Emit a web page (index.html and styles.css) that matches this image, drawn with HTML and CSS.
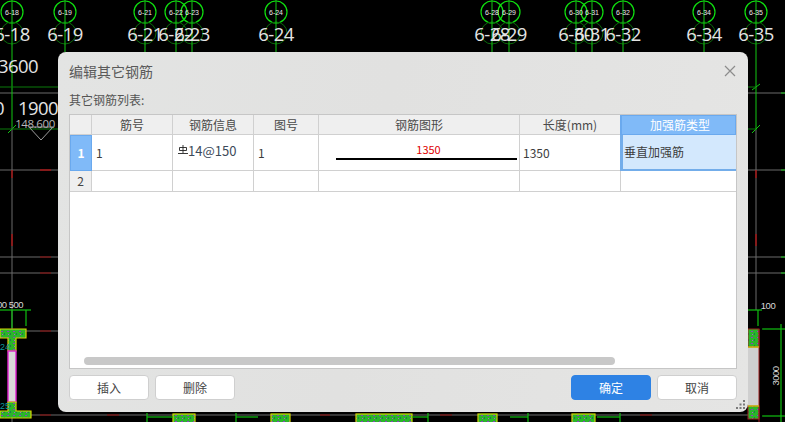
FILE: index.html
```html
<!DOCTYPE html>
<html lang="zh-CN">
<head>
  <meta charset="UTF-8" />
  <title>编辑其它钢筋</title>
  <link rel="stylesheet" href="styles.css">
</head>
<body>

  <!-- CAD drawing behind the dialog -->
  <svg class="cad" width="785" height="422" viewBox="0 0 785 422">
    <defs>
      <pattern id="hatch" width="6" height="6" patternUnits="userSpaceOnUse">
        <rect width="6" height="6" fill="#2ab52a"/>
        <rect x="1" y="1" width="2" height="1" fill="#8a3fc0"/>
        <rect x="4" y="3" width="1" height="2" fill="#1c7f4a"/>
        <rect x="2" y="4" width="1" height="1" fill="#b04fd0"/>
      </pattern>
      <g id="bubble">
        <circle cy="12" r="11" class="ring"/>
        <circle cy="33" r="11" class="ring-dark"/>
        <line y1="0" y2="52" class="axis"/>
      </g>
    </defs>

    <g class="grid-gray">
      <line x1="0" y1="93" x2="58" y2="93"/>
      <line x1="0" y1="170" x2="58" y2="170"/>
      <line x1="0" y1="257" x2="58" y2="257"/>
      <line x1="0" y1="273" x2="58" y2="273"/>
      <line x1="26" y1="331" x2="58" y2="331"/>
      <line x1="31" y1="415" x2="748" y2="415"/>
      <line x1="12" y1="127" x2="12" y2="422"/>
      <line x1="748" y1="93" x2="785" y2="93"/>
      <line x1="748" y1="170" x2="785" y2="170"/>
      <line x1="748" y1="257" x2="785" y2="257"/>
      <line x1="748" y1="273" x2="785" y2="273"/>
      <line x1="756" y1="130" x2="756" y2="310"/>
    </g>

    <g class="dash-red">
      <line x1="12" y1="170" x2="12" y2="178"/>
      <line x1="12" y1="234" x2="12" y2="246"/>
      <line x1="40" y1="170" x2="51" y2="170"/>
      <line x1="756" y1="170" x2="756" y2="178"/>
      <line x1="756" y1="234" x2="756" y2="246"/>
    </g>
    <g class="dash-dark">
      <line x1="40" y1="257" x2="51" y2="257"/>
      <line x1="40" y1="273" x2="51" y2="273"/>
      <line x1="40" y1="331" x2="51" y2="331"/>
      <line x1="40" y1="415" x2="51" y2="415"/>
      <line x1="107" y1="415" x2="119" y2="415"/>
      <line x1="320" y1="415" x2="330" y2="415"/>
      <line x1="440" y1="415" x2="452" y2="415"/>
      <line x1="640" y1="415" x2="652" y2="415"/>
    </g>

    <g class="axis">
      <line x1="12" y1="52" x2="12" y2="127"/>
      <line x1="756" y1="52" x2="756" y2="130"/>
      <line x1="8" y1="133" x2="16" y2="125"/>
      <line x1="752" y1="90" x2="760" y2="84"/>
      <line x1="752" y1="133" x2="760" y2="125"/>
      <line x1="781" y1="93" x2="785" y2="93"/>
      <line x1="781" y1="170" x2="785" y2="170"/>
      <line x1="781" y1="257" x2="785" y2="257"/>
      <line x1="781" y1="273" x2="785" y2="273"/>
    </g>
    <g class="axis-dark">
      <line x1="0" y1="87" x2="58" y2="87"/>
      <line x1="0" y1="129" x2="58" y2="129"/>
      <line x1="748" y1="87" x2="756" y2="87"/>
      <line x1="748" y1="129" x2="756" y2="129"/>
    </g>

    <use href="#bubble" x="12"/>
    <use href="#bubble" x="65"/>
    <use href="#bubble" x="145"/>
    <use href="#bubble" x="176"/>
    <use href="#bubble" x="192"/>
    <use href="#bubble" x="276"/>
    <use href="#bubble" x="492"/>
    <use href="#bubble" x="509"/>
    <use href="#bubble" x="576"/>
    <use href="#bubble" x="592"/>
    <use href="#bubble" x="623"/>
    <use href="#bubble" x="704"/>
    <use href="#bubble" x="756"/>

    <g class="tag">
      <text x="12" y="15">6-18</text>
      <text x="65" y="15">6-19</text>
      <text x="145" y="15">6-21</text>
      <text x="176" y="15">6-22</text>
      <text x="192" y="15">6-23</text>
      <text x="276" y="15">6-24</text>
      <text x="492" y="15">6-28</text>
      <text x="509" y="15">6-29</text>
      <text x="576" y="15">6-30</text>
      <text x="592" y="15">6-31</text>
      <text x="623" y="15">6-32</text>
      <text x="704" y="15">6-34</text>
      <text x="756" y="15">6-35</text>
    </g>
    <g class="label">
      <text x="12" y="41">6-18</text>
      <text x="65" y="41">6-19</text>
      <text x="145" y="41">6-21</text>
      <text x="176" y="41">6-22</text>
      <text x="192" y="41">6-23</text>
      <text x="276" y="41">6-24</text>
      <text x="492" y="41">6-28</text>
      <text x="509" y="41">6-29</text>
      <text x="576" y="41">6-30</text>
      <text x="592" y="41">6-31</text>
      <text x="623" y="41">6-32</text>
      <text x="704" y="41">6-34</text>
      <text x="756" y="41">6-35</text>
      <text x="18" y="73">3600</text>
      <text x="-1" y="115">0</text>
      <text x="38" y="115">1900</text>
    </g>
    <text class="level" x="35" y="128">148.600</text>
    <polyline class="marker" points="29,127 53,127 41,140 29,127"/>

    <!-- left column section -->
    <g class="dim">
      <line x1="0" y1="310" x2="31" y2="310"/>
      <line x1="12" y1="310" x2="12" y2="328"/>
      <line x1="26" y1="310" x2="26" y2="326"/>
    </g>
    <text class="small" x="10" y="308">00 500</text>
    <path class="section" d="M0 329H26V338H16V351H8V338H0Z"/>
    <rect class="tube" x="8" y="351" width="8" height="51"/>
    <path class="section" d="M8 402H16V411H31V418H0V411H8Z"/>
    <text class="note" x="0" y="350">24</text>
    <text class="note" x="0" y="409">25</text>

    <!-- bottom row of sections -->
    <rect class="section" x="173" y="414" width="22" height="9"/>
    <rect class="section" x="271" y="414" width="19" height="9"/>
    <rect class="section" x="356" y="414" width="56" height="9"/>
    <rect class="section" x="478" y="414" width="19" height="9"/>
    <rect class="section" x="572" y="414" width="23" height="9"/>
    <g class="dim">
      <line x1="147" y1="417" x2="173" y2="417"/>
      <line x1="147" y1="413" x2="147" y2="422"/>
      <line x1="236" y1="417" x2="258" y2="417"/>
      <line x1="236" y1="413" x2="236" y2="422"/>
      <line x1="412" y1="417" x2="428" y2="417"/>
      <line x1="428" y1="413" x2="428" y2="422"/>
      <line x1="510" y1="417" x2="528" y2="417"/>
      <line x1="528" y1="413" x2="528" y2="422"/>
      <line x1="597" y1="417" x2="620" y2="417"/>
      <line x1="620" y1="413" x2="620" y2="422"/>
    </g>

    <!-- right column section -->
    <rect class="tube-gray" x="748" y="347" width="11" height="59"/>
    <rect class="section-red" x="748" y="329" width="11" height="18"/>
    <rect class="section-red" x="748" y="406" width="11" height="13"/>
    <line class="edge-red" x1="759" y1="329" x2="759" y2="422"/>
    <line class="edge-yellow" x1="748" y1="347" x2="759" y2="347"/>
    <line class="edge-yellow" x1="748" y1="406" x2="759" y2="406"/>
    <g class="dim">
      <line x1="748" y1="310" x2="762" y2="310"/>
      <line x1="758" y1="310" x2="758" y2="326"/>
      <line x1="762" y1="329" x2="785" y2="329"/>
      <line x1="762" y1="416" x2="785" y2="416"/>
      <line x1="781" y1="324" x2="781" y2="422"/>
    </g>
    <text class="small" x="768" y="309">100</text>
    <text class="small vertical" transform="translate(779 376) rotate(-90)">3000</text>
  </svg>

  <div class="dialog">
    <div class="dialog-title">
      <span>编辑其它钢筋</span>
      <svg class="close" width="12" height="12" viewBox="0 0 12 12">
        <path d="M1 1L11 11M11 1L1 11"/>
      </svg>
    </div>
    <div class="list-label">其它钢筋列表:</div>

    <div class="table-box">
      <table class="rebar-table">
        <colgroup>
          <col class="c-num"><col class="c-no"><col class="c-info"><col class="c-fig"><col class="c-shape"><col class="c-len"><col class="c-type">
        </colgroup>
        <thead>
          <tr>
            <th></th>
            <th>筋号</th>
            <th>钢筋信息</th>
            <th>图号</th>
            <th>钢筋图形</th>
            <th>长度(mm)</th>
            <th class="head-active">加强筋类型</th>
          </tr>
        </thead>
        <tbody>
          <tr class="row-one">
            <td class="row-num row-active">1</td>
            <td>1</td>
            <td class="info-cell">
              <svg class="grade" width="10" height="10" viewBox="0 0 10 10">
                <path d="M5 0V8M1.5 2.5H8.5V5.5H1.5ZM0 8.5H10"/>
              </svg><span class="info-text">14@150</span>
            </td>
            <td>1</td>
            <td class="shape-cell">
              <div class="shape-len">1350</div>
              <div class="shape-line"></div>
            </td>
            <td class="len-cell">1350</td>
            <td class="cell-active">垂直加强筋</td>
          </tr>
          <tr class="row-two">
            <td class="row-num">2</td>
            <td></td><td></td><td></td><td></td><td></td><td></td>
          </tr>
        </tbody>
      </table>
      <div class="scroll-thumb"></div>
    </div>

    <div class="actions">
      <button class="btn">插入</button>
      <button class="btn">删除</button>
      <div class="spacer"></div>
      <button class="btn btn-primary">确定</button>
      <button class="btn">取消</button>
    </div>

    <svg class="grip" width="10" height="9" viewBox="0 0 10 9">
      <rect x="7" y="0" width="2" height="2"/>
      <rect x="3.5" y="3.5" width="2" height="2"/>
      <rect x="7" y="3.5" width="2" height="2"/>
      <rect x="0" y="7" width="2" height="2"/>
      <rect x="3.5" y="7" width="2" height="2"/>
      <rect x="7" y="7" width="2" height="2"/>
    </svg>
  </div>

</body>
</html>
```

FILE: styles.css
```css
* {
  box-sizing: border-box;
}

body {
  margin: 0;
  width: 785px;
  height: 422px;
  overflow: hidden;
  background: #000;
  font-family: "Noto Sans CJK SC", "Noto Sans", sans-serif;
  font-size: 12px;
  color: #3c3c3c;
}

/* drawing */
.cad {
  position: absolute;
  left: 0;
  top: 0;
  display: block;
}

.ring {
  fill: none;
  stroke: #0fe00f;
  stroke-width: 1.2;
}

.ring-dark {
  fill: none;
  stroke: #0b6a0b;
  stroke-width: 1;
}

.axis line,
line.axis {
  stroke: #12c812;
  stroke-width: 1;
}

.axis-dark line {
  stroke: #0a7a0a;
  stroke-width: 1;
}

.grid-gray line {
  stroke: #6a6a6a;
  stroke-width: 1;
}

.dash-red line {
  stroke: #d80000;
  stroke-width: 1;
}

.dash-dark line {
  stroke: #8a0000;
  stroke-width: 1;
}

.tag {
  font-family: "Liberation Sans", sans-serif;
  font-size: 7px;
  fill: #e8e8e8;
  text-anchor: middle;
}

.label {
  font-family: "Open Sans", sans-serif;
  font-size: 18.5px;
  fill: #e4e4e4;
  text-anchor: middle;
  letter-spacing: -0.6px;
}

.level {
  font-family: "Open Sans", sans-serif;
  font-size: 11.5px;
  fill: #b8b8b8;
  text-anchor: middle;
  letter-spacing: -0.4px;
}

.marker {
  fill: none;
  stroke: #9c9c9c;
  stroke-width: 1;
}

.dim line {
  stroke: #10c010;
  stroke-width: 1.2;
}

.small {
  font-family: "Liberation Sans", sans-serif;
  font-size: 9.5px;
  fill: #d8d8d8;
  text-anchor: middle;
  letter-spacing: -0.5px;
}

.note {
  font-family: "Liberation Sans", sans-serif;
  font-size: 9px;
  fill: #0e9a9a;
}

.section {
  fill: url(#hatch);
  stroke: #d6d600;
  stroke-width: 1.2;
}

.section-red {
  fill: url(#hatch);
  stroke: #a02020;
  stroke-width: 1;
}

.tube {
  fill: #d8d8d8;
  stroke: #e020d0;
  stroke-width: 1.4;
}

.tube-gray {
  fill: #cfcfcf;
}

.edge-red {
  stroke: #a02020;
  stroke-width: 1;
}

.edge-yellow {
  stroke: #d6d600;
  stroke-width: 1.2;
}

/* dialog */
.dialog {
  position: absolute;
  left: 58px;
  top: 52px;
  width: 690px;
  height: 360px;
  padding: 0 11px 12px;
  display: flex;
  flex-direction: column;
  border-radius: 8px;
  background: linear-gradient(100deg, #e3e4e3 0%, #e1e1e0 45%, #e5e5e4 100%);
}

.dialog-title {
  height: 38px;
  flex: none;
  display: flex;
  align-items: center;
  justify-content: space-between;
  font-size: 14px;
  color: #5a5a5a;
}

.close {
  margin-right: 1px;
}

.close path {
  fill: none;
  stroke: #8c8c8c;
  stroke-width: 1.2;
}

.list-label {
  height: 24px;
  flex: none;
  padding-bottom: 4px;
  line-height: 20px;
  color: #555;
}

.table-box {
  flex: 1;
  display: flex;
  flex-direction: column;
  justify-content: space-between;
  background: #fff;
  border: 1px solid #c6c6c6;
}

.rebar-table {
  width: 666px;
  table-layout: fixed;
  border-collapse: separate;
  border-spacing: 0;
}

.c-num { width: 22px; }
.c-no { width: 81px; }
.c-info { width: 81px; }
.c-fig { width: 65px; }
.c-shape { width: 201px; }
.c-len { width: 101px; }
.c-type { width: 115px; }

.rebar-table th,
.rebar-table td {
  padding: 0;
  border-right: 1px solid #d0d0d0;
  border-bottom: 1px solid #d0d0d0;
  font-size: 12px;
  line-height: 16px;
}

.rebar-table th:last-child,
.rebar-table td:last-child {
  border-right: none;
}

.rebar-table th {
  height: 20px;
  background: #efefef;
  font-weight: 400;
  color: #4a4a4a;
}

.rebar-table th.head-active {
  padding-left: 3px;
  background: #80baf8;
  border: 1px solid #6aa9ee;
  box-shadow: -1px 0 0 #6aa9ee;
  color: #fff;
}

.row-one td {
  height: 36px;
  padding-left: 4px;
}

.row-two td {
  height: 21px;
}

.rebar-table td.row-num {
  padding: 0;
  background: #efefef;
  text-align: center;
  color: #444;
}

.rebar-table td.row-active {
  background: #80baf8;
  border: 1px solid #6aa9ee;
  color: #fff;
  font-weight: 700;
}

.rebar-table td.info-cell {
  padding: 0 0 3px 5px;
  color: #3c4a5a;
}

.info-text {
  font-size: 13px;
}

.grade {
  vertical-align: 1px;
}

.grade path {
  fill: none;
  stroke: #222;
  stroke-width: 0.9;
}

.rebar-table td.shape-cell {
  padding: 0 2px 4px 17px;
}

.shape-len {
  font-size: 11px;
  line-height: 15px;
  color: #e00000;
  text-align: center;
  padding-left: 4px;
}

.shape-line {
  height: 2px;
  margin-top: 1px;
  background: #000;
}

.rebar-table td.len-cell {
  padding-left: 3px;
}

.rebar-table td.cell-active {
  background: #d3e8fd;
  border: 2px solid #73adea;
  border-top: none;
  border-right: none;
  box-shadow: -1px 0 0 #73adea;
  padding-left: 1px;
}

.scroll-thumb {
  width: 531px;
  height: 8px;
  margin: 0 0 3px 14px;
  border-radius: 4px;
  background: #c8c8c8;
}

.actions {
  flex: none;
  height: 25px;
  margin-top: 6px;
  display: flex;
  gap: 6px;
}

.spacer {
  flex: 1;
}

.btn {
  width: 80px;
  height: 25px;
  padding: 0;
  border: 1px solid #cfcfcf;
  border-radius: 4px;
  background: #fff;
  font-family: inherit;
  font-size: 12px;
  color: #444;
}

.btn-primary {
  border-color: #2e82e4;
  background: #2e82e4;
  color: #fff;
}

.grip {
  position: absolute;
  right: 2px;
  bottom: 3px;
}

.grip rect {
  fill: #7a7a7a;
}
```
